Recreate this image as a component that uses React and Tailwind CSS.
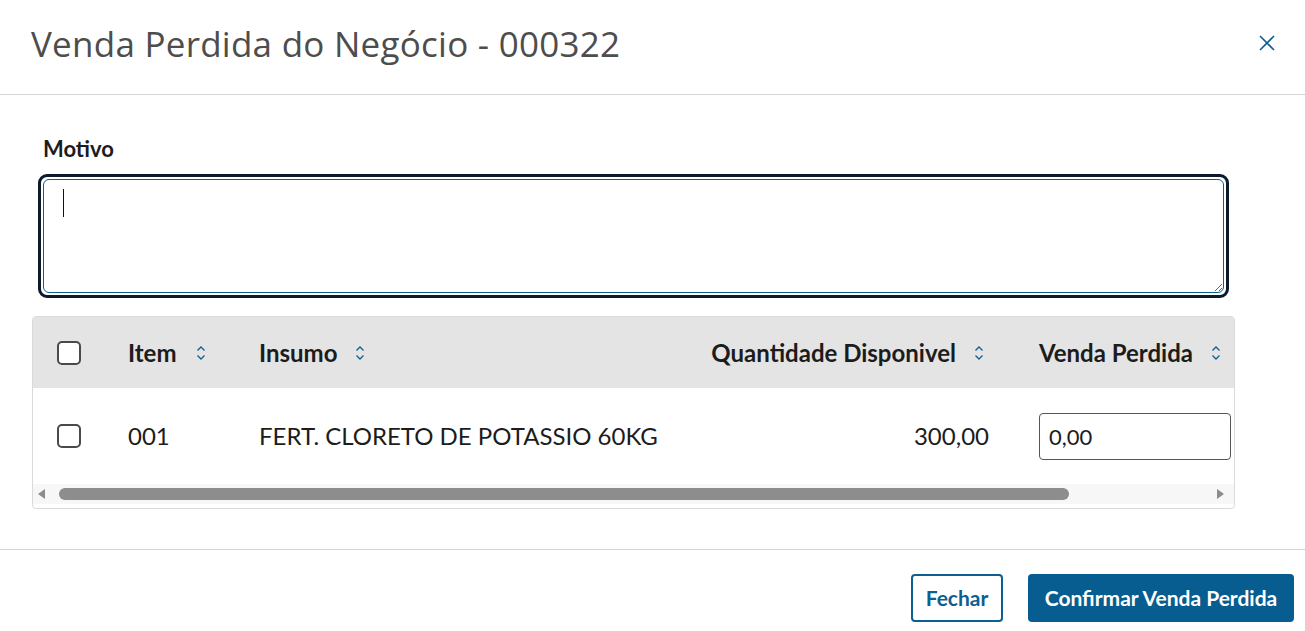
import { useState } from 'react'

const font = { fontFamily: '"Lato", "Noto Sans", sans-serif' }

function SortIcon() {
  return (
    <svg className="w-[10px] h-[18px] text-[#0c5f91] shrink-0" viewBox="0 0 10 18" fill="none" stroke="currentColor" strokeWidth={1.3}>
      <path d="M1.5 6.5L5 3l3.5 3.5" />
      <path d="M1.5 11.5L5 15l3.5-3.5" />
    </svg>
  )
}

function Check() {
  return <div className="w-[24px] h-[24px] rounded-[5px] border-2 border-[#4a4a4a] bg-white" />
}

export default function App() {
  const [motivo, setMotivo] = useState('')

  return (
    <div className="w-[1305px] h-[631px] bg-white flex flex-col overflow-hidden text-[#1c1c1c]" style={font}>
      {/* cabeçalho */}
      <div className="h-[95px] shrink-0 flex items-center justify-between pl-[31px] pr-[30px] border-b border-[#d4d4d4]">
        <h1 className="text-[35px] text-[#4d4d4d] leading-none -mt-[7px] tracking-[0.25px]" style={{ fontFamily: '"Open Sans", sans-serif' }}>
          Venda Perdida do Negócio - 000322
        </h1>
        <button className="text-[#0c5f91] -mt-[8px]" aria-label="Fechar">
          <svg className="w-[16px] h-[16px]" viewBox="0 0 16 16" stroke="currentColor" strokeWidth={1.6}>
            <path d="M1 1l14 14M15 1L1 15" />
          </svg>
        </button>
      </div>

      {/* conteúdo */}
      <div className="flex-1 pl-[32px] pr-[71px] pt-[41px]">
        <label className="block pl-[11px] text-[22px] font-bold text-[#1c1c1c] leading-[26px]">Motivo</label>
        <div className="relative mt-[12px] ml-[6px] w-[1191px] h-[124px] rounded-[9px] border-[3px] border-[#0b1b2b] p-[2px]">
          <textarea
            value={motivo}
            onChange={(e) => setMotivo(e.target.value)}
            className="w-full h-full block rounded-[6px] border border-[#0c5f91] outline-none px-[18px] py-[8px] text-[20px] resize-y"
          />
          {/* cursor */}
          <div className="absolute left-[22px] top-[12px] w-[1px] h-[28px] bg-[#111] pointer-events-none" />
        </div>

        <div className="mt-[18px] w-[1203px] h-[193px] border border-[#dadada] rounded-[4px] overflow-hidden flex flex-col">
          {/* header da tabela */}
          <div className="h-[71px] shrink-0 bg-[#e4e4e4] flex items-center text-[24px] font-bold text-[#1c1c1c]">
            <div className="w-[71px] pl-[24px] shrink-0"><Check /></div>
            <div className="w-[131px] pl-[24px] shrink-0 flex items-center gap-[19px]">Item <SortIcon /></div>
            <div className="w-[330px] pl-[24px] shrink-0 flex items-center gap-[18px]">Insumo <SortIcon /></div>
            <div className="w-[450px] shrink-0 flex items-center justify-end gap-[18px] pr-[31px] whitespace-nowrap">Quantidade Disponivel <SortIcon /></div>
            <div className="flex-1 pl-[24px] flex items-center gap-[18px] whitespace-nowrap">Venda Perdida <SortIcon /></div>
          </div>
          {/* linha */}
          <div className="h-[96px] shrink-0 flex items-center text-[24px] text-[#1c1c1c]">
            <div className="w-[71px] pl-[24px] shrink-0"><Check /></div>
            <div className="w-[131px] pl-[24px] shrink-0">001</div>
            <div className="w-[330px] pl-[24px] shrink-0 whitespace-nowrap">FERT. CLORETO DE POTASSIO 60KG</div>
            <div className="w-[450px] shrink-0 text-right pr-[26px]">300,00</div>
            <div className="flex-1 pl-[24px]">
              <input
                defaultValue="0,00"
                className="w-[192px] h-[47px] rounded-[4px] border border-[#555] px-[9px] text-[22px] outline-none"
              />
            </div>
          </div>
          {/* barra de rolagem */}
          <div className="h-[20px] bg-[#f7f7f7] flex items-center px-[5px] gap-[5px]">
            <div className="w-0 h-0 border-y-[5px] border-y-transparent border-r-[7px] border-r-[#8c8c8c]" />
            <div className="w-[1010px] h-[12px] rounded-full bg-[#8d8d8d] ml-[9px]" />
            <div className="flex-1" />
            <div className="w-0 h-0 border-y-[5px] border-y-transparent border-l-[7px] border-l-[#8c8c8c] mr-[5px]" />
          </div>
        </div>
      </div>

      {/* rodapé */}
      <div className="h-[82px] shrink-0 border-t border-[#d4d4d4] flex items-start justify-end gap-[25px] pr-[11px] pt-[24px]">
        <button className="w-[92px] h-[48px] rounded-[4px] border-2 border-[#0c5f91] text-[#0c5f91] text-[21px] font-bold bg-white">
          Fechar
        </button>
        <button className="w-[266px] h-[48px] rounded-[4px] bg-[#075d90] text-white text-[21px] font-bold whitespace-nowrap">
          Confirmar Venda Perdida
        </button>
      </div>
    </div>
  )
}
